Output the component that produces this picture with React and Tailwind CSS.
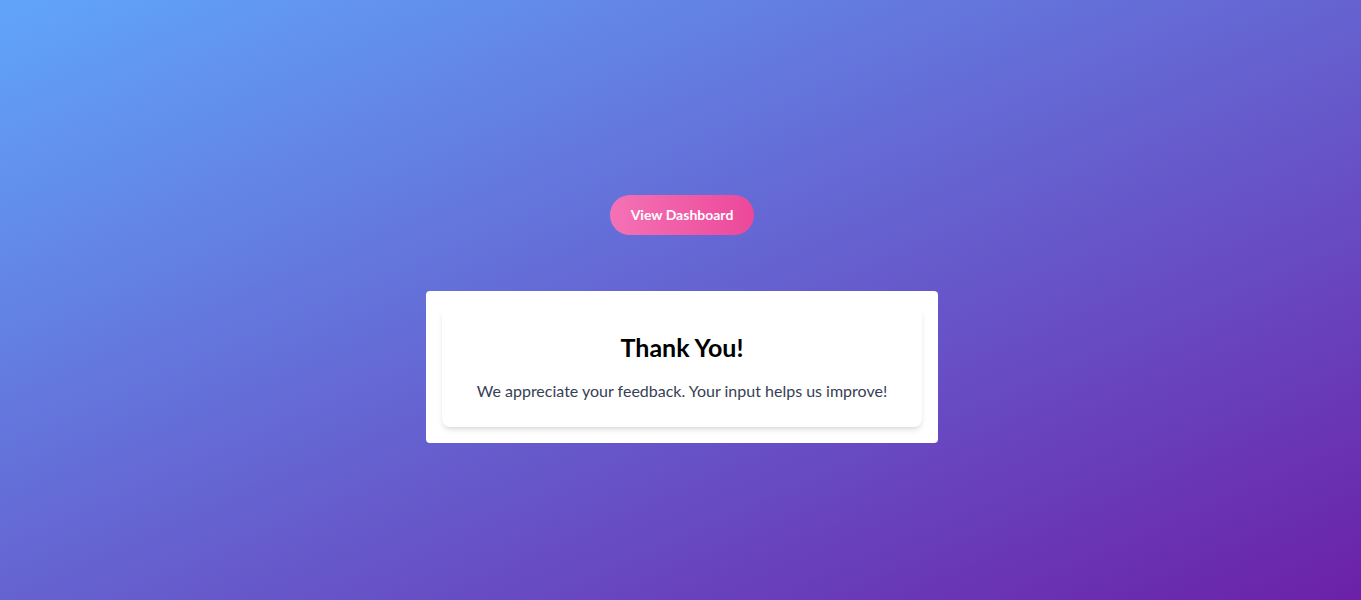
export default function App() {
  return (
    <div
      className="min-h-screen w-full bg-[linear-gradient(to_bottom_right,#60a5fa,#6b21a8)] flex flex-col items-center pt-[195px] pl-[3px]"
      style={{ fontFamily: 'Lato, "Noto Sans", sans-serif' }}
    >
      <button className="h-10 w-36 rounded-full bg-[linear-gradient(to_right,#f472b6,#ec4899)] text-white text-sm font-bold">
        View Dashboard
      </button>
      <div className="mt-14 w-[512px] bg-white rounded p-4">
        <div className="bg-white rounded-lg shadow-md p-6 text-center">
          <h2 className="text-[25px] leading-8 font-bold text-black mb-4">Thank You!</h2>
          <p className="text-gray-700 text-base">
            We appreciate your feedback. Your input helps us improve!
          </p>
        </div>
      </div>
    </div>
  );
}
